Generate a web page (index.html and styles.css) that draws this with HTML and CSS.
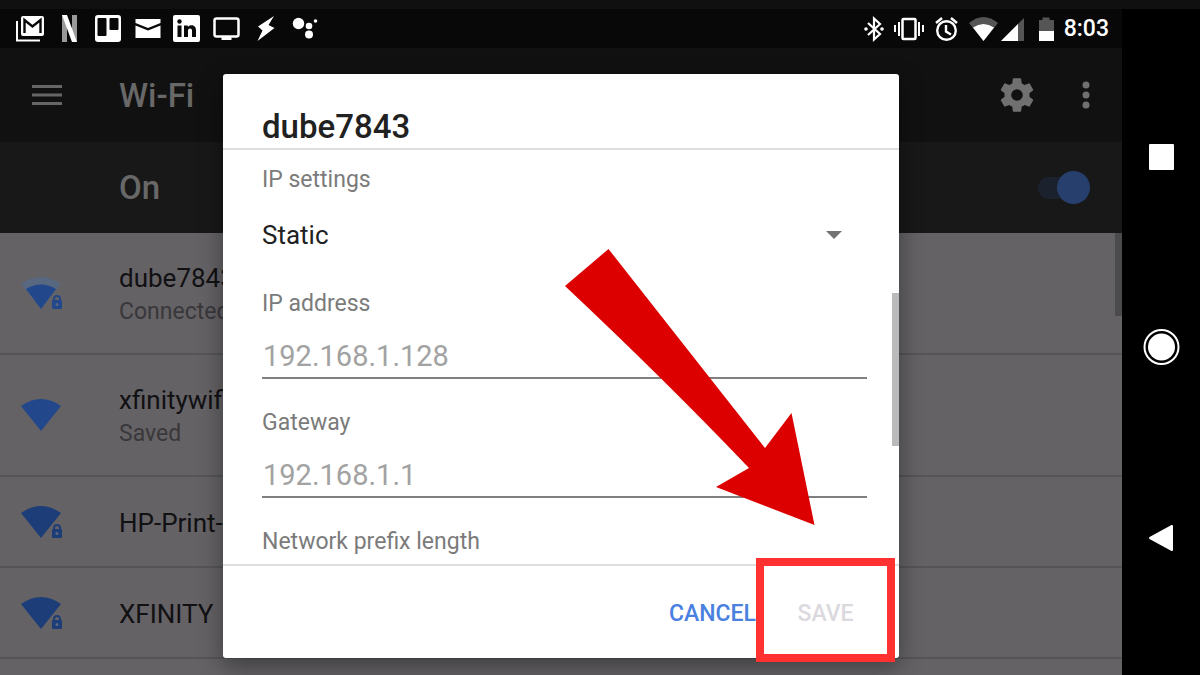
FILE: index.html
```html
<!DOCTYPE html>
<html lang="en">

<head>
    <meta charset="UTF-8">
    <title>Wi-Fi</title>
    <link rel="stylesheet" href="styles.css">
</head>

<body>
    <div class="top-edge"></div>
    <div class="device">
        <div class="screen">
            <!-- status bar -->
            <div class="status">
                <div class="notifications">
                    <svg width="29" height="29" viewBox="0 0 29 29">
                        <path d="M1 7v19.500H24" fill="none" stroke="#fff" stroke-width="2" />
                        <rect x="5" y="2" width="23" height="20" rx="2" fill="#fff" />
                        <path d="M8.500 19V6l8 6.500 8-6.500v13" fill="none" stroke="#080808" stroke-width="2.400" />
                    </svg>
                    <svg width="29" height="29" viewBox="0 0 29 29">
                        <path d="M7 1h5v27H7zM17 1h5v27h-5z" fill="#999" />
                        <path d="M7 1h5l10 27h-5z" fill="#fff" />
                    </svg>
                    <svg width="29" height="29" viewBox="0 0 29 29">
                        <rect x="1" y="1" width="26" height="27" rx="3" fill="#fff" />
                        <rect x="3.500" y="4" width="9" height="18" rx="1" fill="#080808" />
                        <rect x="15.500" y="4" width="9" height="12" rx="1" fill="#080808" />
                    </svg>
                    <svg width="29" height="29" viewBox="0 0 29 29">
                        <path d="M2.500 5h25v4l-12.500 5L2.500 9zM2.500 11.500l12.500 5 12.500-5V24h-25z" fill="#fff" />
                    </svg>
                    <svg width="29" height="29" viewBox="0 0 29 29">
                        <rect x="1" y="1" width="27" height="27" rx="2" fill="#fff" />
                        <circle cx="7.500" cy="7.500" r="2.200" fill="#080808" />
                        <path d="M5.500 11.500h4V23h-4zM12 11.500h3.800v1.600c2-3 8.200-2.700 8.200 3V23h-4v-6.200c0-3-4-3-4 0V23h-4z" fill="#080808" />
                    </svg>
                    <svg width="29" height="29" viewBox="0 0 29 29">
                        <rect x="3.500" y="4.500" width="24" height="18" rx="2" fill="none" stroke="#fff" stroke-width="2.500" />
                        <path d="M10.500 22h10v4h-10z" fill="#fff" />
                    </svg>
                    <svg width="29" height="29" viewBox="0 0 29 29">
                        <path d="M24 2L8 12.500l4.500 4L7.500 27l17-13-6-3z" fill="#fff" />
                    </svg>
                    <svg width="29" height="29" viewBox="0 0 29 29" fill="#fff">
                        <circle cx="9.500" cy="9.500" r="5.700" />
                        <circle cx="20" cy="12" r="3.300" />
                        <circle cx="20" cy="20.500" r="4" />
                        <circle cx="26.500" cy="7" r="1.800" />
                    </svg>
                </div>
                <div class="system">
                    <svg width="20" height="26" viewBox="0 0 20 26">
                        <path d="M4 7l12 11-6 5.500V2.500L16 8 4 19" fill="none" stroke="#fff" stroke-width="2.200" />
                        <circle cx="2" cy="13" r="1.800" fill="#fff" />
                        <circle cx="18" cy="13" r="1.800" fill="#fff" />
                    </svg>
                    <svg width="30" height="26" viewBox="0 0 30 26" fill="none" stroke="#fff" stroke-width="2">
                        <rect x="8.500" y="3" width="13" height="20" rx="1" stroke-width="2.500" />
                        <path d="M5 6v14M25 6v14M1 9v7M29 9v7" />
                    </svg>
                    <svg width="25" height="26" viewBox="0 0 25 26" fill="none" stroke="#fff" stroke-width="2.400">
                        <circle cx="12.500" cy="14.500" r="9.300" />
                        <path d="M12 9v6.500l5 3M2 7l6-5M23 7l-6-5" />
                    </svg>
                    <span class="signals">
                        <svg width="29" height="26" viewBox="0 0 29 26">
                            <path d="M0 7q14.500-12 29 0L14.500 25z" fill="#555" />
                            <path d="M4 11.500q10.500-7 21 0L14.500 25z" fill="#fff" />
                        </svg>
                        <svg width="23" height="26" viewBox="0 0 23 26">
                            <path d="M23 2v23H0z" fill="#555" />
                            <path d="M17 8v17H0z" fill="#fff" />
                        </svg>
                    </span>
                    <svg width="20" height="26" viewBox="0 0 20 26">
                        <path d="M5 4h3.500V1.500h7V4H20v11H5z" fill="#555" />
                        <path d="M5 15h15v10H5z" fill="#fff" />
                    </svg>
                    <span class="clock">8:03</span>
                </div>
            </div>

            <header class="appbar">
                <button class="icon-btn menu" aria-label="Menu">
                    <svg width="30" height="20" viewBox="0 0 30 20"><path d="M0 1.500h30M0 10h30M0 18.500h30" stroke="#666" stroke-width="3" /></svg>
                </button>
                <h1 class="heading">Wi-Fi</h1>
                <button class="icon-btn gear" aria-label="Settings">
                    <svg width="40" height="40" viewBox="0 0 24 24"><path fill="#707070" d="M19.430 12.980c.04-.32.070-.64.070-.98s-.03-.66-.07-.98l2.110-1.650c.19-.15.240-.42.120-.64l-2-3.460c-.12-.22-.39-.3-.61-.22l-2.490 1c-.52-.4-1.080-.73-1.690-.98l-.38-2.650A.49.490 0 0 0 14 2h-4c-.25 0-.46.180-.49.420l-.38 2.650c-.61.250-1.170.590-1.690.980l-2.490-1c-.23-.09-.49 0-.61.220l-2 3.460c-.13.220-.07.490.120.640l2.110 1.650c-.04.320-.07.650-.07.980s.03.660.070.980l-2.110 1.650c-.19.150-.24.420-.12.640l2 3.460c.12.220.39.300.610.220l2.490-1c.52.400 1.080.730 1.690.980l.38 2.650c.03.240.24.420.490.420h4c.25 0 .46-.18.490-.42l.38-2.650c.61-.25 1.170-.59 1.690-.98l2.490 1c.23.090.49 0 .61-.22l2-3.460c.12-.22.070-.49-.12-.64l-2.110-1.650zM12 15.500a3.500 3.500 0 1 1 0-7 3.500 3.500 0 0 1 0 7z" /></svg>
                </button>
                <button class="icon-btn" aria-label="More options">
                    <svg width="8" height="28" viewBox="0 0 8 28" fill="#707070">
                        <circle cx="4" cy="4" r="3.500" />
                        <circle cx="4" cy="14" r="3.500" />
                        <circle cx="4" cy="24" r="3.500" />
                    </svg>
                </button>
            </header>

            <div class="switchbar">
                <label class="heading" for="wifi">On</label>
                <input class="toggle" id="wifi" type="checkbox" checked>
            </div>

            <ul class="networks">
                <li class="network tall">
                    <svg width="44" height="36" viewBox="0 0 44 36">
                        <path d="M0 8Q20-6 40 8L20 33z" fill="#586880" />
                        <path d="M5 13Q20 4 35 13L20 33z" fill="#22478a" />
                        <path d="M33 25v-2a3 3 0 0 1 6 0v2" fill="none" stroke="#22478a" stroke-width="2" />
                        <rect x="31" y="24" width="10" height="9" rx="1" fill="#22478a" />
                        <circle cx="36" cy="28.500" r="1.500" fill="#586880" />
                    </svg>
                    <div>
                        <p class="ssid">dube7843</p>
                        <p class="state">Connected</p>
                    </div>
                </li>
                <li class="network tall">
                    <svg width="44" height="36" viewBox="0 0 44 36">
                        <path d="M0 8Q20-6 40 8L20 33z" fill="#22478a" />
                    </svg>
                    <div>
                        <p class="ssid">xfinitywifi</p>
                        <p class="state">Saved</p>
                    </div>
                </li>
                <li class="network">
                    <svg width="44" height="36" viewBox="0 0 44 36">
                        <path d="M0 8Q20-6 40 8L20 33z" fill="#1d3d78" />
                        <path d="M33 25v-2a3 3 0 0 1 6 0v2" fill="none" stroke="#1d3d78" stroke-width="2" />
                        <rect x="31" y="24" width="10" height="9" rx="1" fill="#1d3d78" />
                        <circle cx="36" cy="28.500" r="1.500" fill="#586880" />
                    </svg>
                    <p class="ssid">HP-Print-</p>
                </li>
                <li class="network">
                    <svg width="44" height="36" viewBox="0 0 44 36">
                        <path d="M0 8Q20-6 40 8L20 33z" fill="#1d3d78" />
                        <path d="M33 25v-2a3 3 0 0 1 6 0v2" fill="none" stroke="#1d3d78" stroke-width="2" />
                        <rect x="31" y="24" width="10" height="9" rx="1" fill="#1d3d78" />
                        <circle cx="36" cy="28.500" r="1.500" fill="#586880" />
                    </svg>
                    <p class="ssid">XFINITY</p>
                </li>
            </ul>

            <!-- network dialog -->
            <div class="overlay">
                <form class="dialog">
                    <h2 class="title">dube7843</h2>
                    <div class="fields">
                        <label for="ipset">IP settings</label>
                        <div class="picker">
                            <select id="ipset">
                                <option>Static</option>
                            </select>
                            <svg width="16" height="8" viewBox="0 0 16 8"><path d="M0 0h16L8 8z" fill="#737373" /></svg>
                        </div>
                        <label for="ip">IP address</label>
                        <input class="text" id="ip" type="text" placeholder="192.168.1.128">
                        <label for="gateway">Gateway</label>
                        <input class="text" id="gateway" type="text" placeholder="192.168.1.1">
                        <p class="next">Network prefix length</p>
                        <span class="thumb"></span>
                    </div>
                    <div class="actions">
                        <button class="cancel" type="button">CANCEL</button>
                        <div class="marked">
                            <button class="save" type="button" disabled>SAVE</button>
                        </div>
                    </div>
                    <svg class="arrow" width="250" height="276" viewBox="0 0 250 276">
                        <path d="M0 37L43.500 0 200 199 226.500 164 249.500 276 151 238 184 219Q100 131 0 37z" fill="#dc0000" />
                    </svg>
                </form>
            </div>
        </div>

        <nav class="navbar">
            <button class="icon-btn" aria-label="Recent apps">
                <svg width="26" height="26" viewBox="0 0 26 26"><rect x="1" width="25" height="26" rx="1" fill="#fff" /></svg>
            </button>
            <button class="icon-btn" aria-label="Home">
                <svg width="38" height="38" viewBox="0 0 38 38">
                    <circle cx="19.500" cy="19" r="17" fill="none" stroke="#fff" stroke-width="2" />
                    <circle cx="19.500" cy="19" r="13.500" fill="#fff" />
                </svg>
            </button>
            <button class="icon-btn" aria-label="Back">
                <svg width="26" height="28" viewBox="0 0 26 28"><path d="M24 2v24L2 14z" fill="#fff" stroke="#fff" stroke-width="2" stroke-linejoin="round" /></svg>
            </button>
        </nav>
    </div>
</body>

</html>
```
FILE: styles.css
```css
* {
    box-sizing: border-box;
}

body {
    margin: 0;
    height: 100vh;
    display: flex;
    flex-direction: column;
    overflow: hidden;
    background: #000;
    font-family: Roboto, "Liberation Sans", sans-serif;
    font-size: 23px;
}

h1,
h2,
p,
ul {
    margin: 0;
    padding: 0;
}

svg {
    display: block;
    flex: none;
}

button,
input,
select {
    margin: 0;
    padding: 0;
    border: 0;
    background: none;
    font: inherit;
}

.top-edge {
    flex: none;
    height: 9px;
    background: #101010;
}

.device {
    flex: 1;
    min-height: 0;
    display: flex;
}

.screen {
    position: relative;
    flex: 1;
    display: flex;
    flex-direction: column;
    overflow: hidden;
    background: #646265;
}

/* status bar */
.status {
    flex: none;
    height: 39px;
    padding: 0 13px 0 16px;
    display: flex;
    justify-content: space-between;
    align-items: center;
    background: #080808;
}

.notifications,
.system {
    display: flex;
    align-items: center;
    gap: 10px;
}

.signals {
    display: flex;
    gap: 3px;
}

.clock {
    color: #fff;
    font-weight: 500;
}

/* app bar */
.appbar {
    flex: none;
    height: 94px;
    padding: 0 32px;
    display: flex;
    align-items: center;
    background: #111;
}

.icon-btn {
    display: flex;
    justify-content: center;
    align-items: center;
}

.menu {
    width: 87px;
    justify-content: flex-start;
}

.heading {
    flex: 1;
    color: #686868;
    font-size: 33px;
    font-weight: 500;
}

.gear {
    margin-right: 45px;
}

.switchbar {
    flex: none;
    height: 91px;
    padding: 0 32px 0 119px;
    display: flex;
    align-items: center;
    background: #181818;
}

.toggle {
    appearance: none;
    width: 52px;
    height: 22px;
    display: flex;
    justify-content: flex-end;
    align-items: center;
    border-radius: 11px;
    background: #1b212d;
}

.toggle::after {
    content: "";
    flex: none;
    width: 33px;
    height: 33px;
    border-radius: 50%;
    background: #263f6d;
}

/* network list */
.networks {
    list-style: none;
}

.network {
    height: 91px;
    padding: 2px 0 0 21px;
    display: flex;
    align-items: center;
    gap: 54px;
    border-bottom: 2px solid #565457;
}

.tall {
    height: 122px;
}

.ssid {
    color: #111013;
    font-size: 26px;
    line-height: 36px;
}

.state {
    color: #39373a;
    line-height: 32px;
}

.screen::after {
    content: "";
    position: absolute;
    top: 224px;
    right: 0;
    width: 7px;
    height: 83px;
    background: #4b4a4c;
}

/* dialog */
.overlay {
    position: absolute;
    inset: 65px 0 0;
    display: flex;
    justify-content: center;
    align-items: flex-start;
}

.dialog {
    position: relative;
    width: 60%;
    min-width: 676px;
    background: #fff;
    border-radius: 3px;
    box-shadow: 0 8px 24px rgba(0, 0, 0, .4);
}

.title {
    padding: 34px 39px 2px;
    border-bottom: 2px solid #dedede;
    color: #212121;
    font-size: 33px;
    font-weight: 500;
    line-height: 38px;
}

.fields {
    position: relative;
    height: 414px;
    padding: 16px 32px 0 39px;
    overflow: hidden;
    color: #7b7b7b;
    line-height: 28px;
}

.fields label {
    display: block;
}

.picker {
    height: 82px;
    margin-bottom: 14px;
    padding-right: 25px;
    display: flex;
    align-items: center;
}

.picker select {
    appearance: none;
    flex: 1;
    color: #212121;
    font-size: 26px;
}

.text {
    width: 100%;
    height: 61px;
    margin-bottom: 30px;
    padding: 16px 1px 0;
    display: block;
    border-bottom: 2px solid #808080;
    font-size: 29px;
}

.text::placeholder {
    color: #a2a2a2;
}

.thumb {
    position: absolute;
    top: 143px;
    right: 0;
    width: 7px;
    height: 153px;
    background: #bababa;
}

.actions {
    height: 94px;
    padding: 2px 4px 0 0;
    display: flex;
    justify-content: flex-end;
    align-items: center;
    border-top: 2px solid #dedede;
    font-weight: 500;
}

.cancel {
    color: #4a80e0;
}

.marked {
    position: relative;
    width: 139px;
    display: flex;
    justify-content: center;
}

/* red frame round the save button */
.marked::after {
    content: "";
    position: absolute;
    inset: -42px 0 -35px;
    border: 8px solid #ff3131;
}

.save {
    color: #dcd9de;
}

.arrow {
    position: absolute;
    top: 175px;
    left: 342px;
}

/* navigation buttons */
.navbar {
    flex: none;
    width: 78px;
    padding: 56px 0 44px;
    display: flex;
    flex-direction: column;
    justify-content: space-around;
    align-items: center;
    background: #000;
}
```
